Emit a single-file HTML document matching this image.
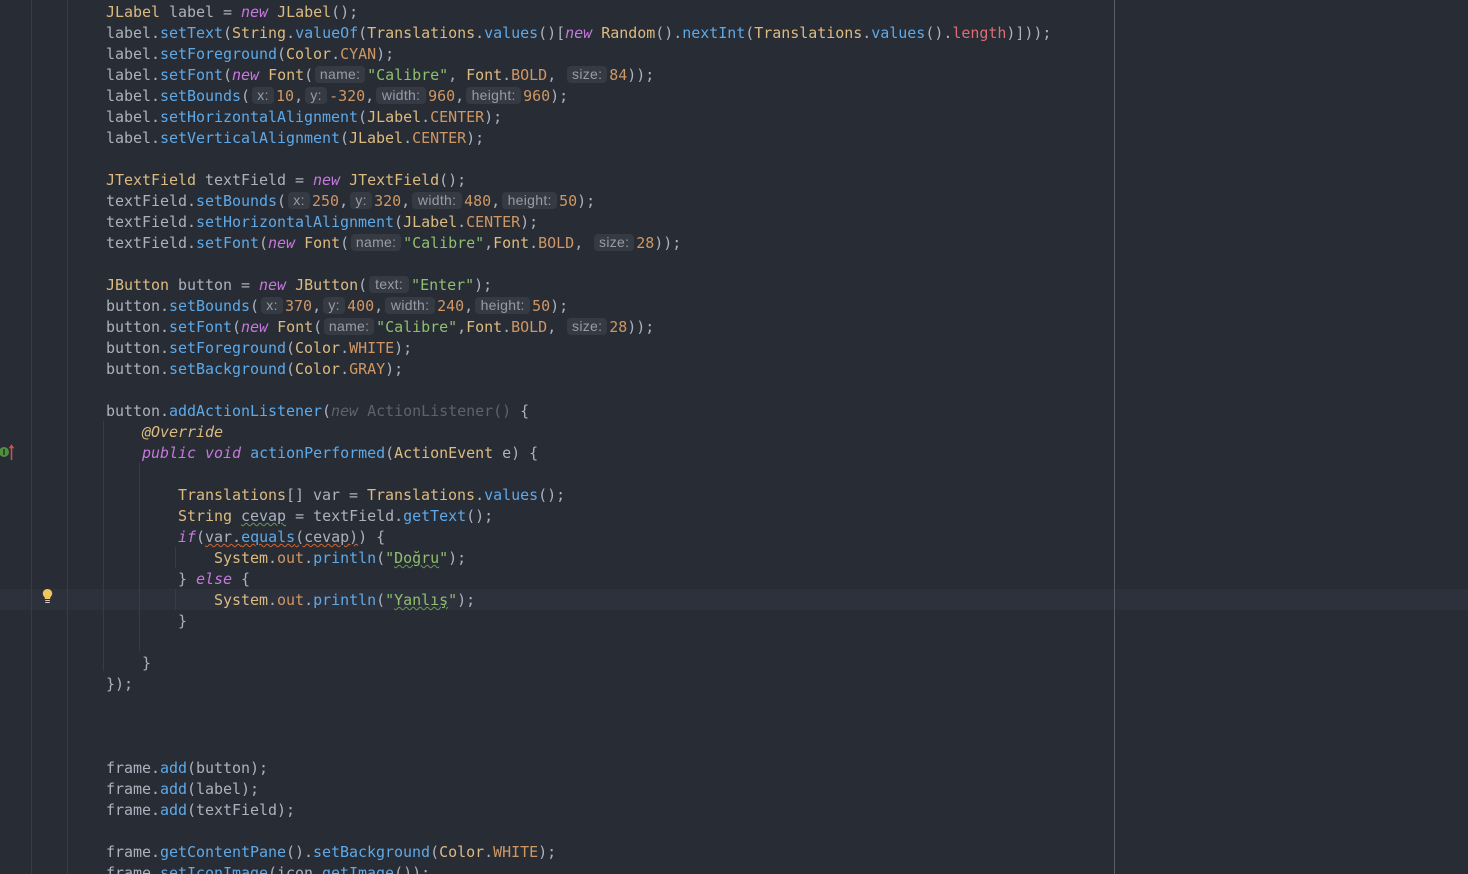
<!DOCTYPE html>
<html><head><meta charset="utf-8"><style>
html,body{margin:0;padding:0;width:1468px;height:874px;overflow:hidden;background:#282c34}
#c{position:absolute;left:106px;top:2px;width:1300px;height:872px;overflow:hidden;font:15px/21px "DejaVu Sans Mono","Liberation Mono",monospace;letter-spacing:-.03px;color:#abb2bf}
#c div{height:21px;white-space:pre}
.v{position:absolute;width:1px;background:#383c44}
b,i,u,s,em,q,tt,kbd{font:inherit;text-decoration:none;quotes:none}
b{color:#dcbb80}u{color:#5ea9e8}i{color:#c678dd;font-style:italic}s{color:#cf9764}em{color:#8fbf70;font-style:normal}q{color:#e06c75}
q:before,q:after{content:none}
tt{color:#5c6370}
.a{color:#dcbb80;font-style:italic}
kbd{display:inline-block;box-sizing:border-box;height:17px;margin:0 2px;font:14px/17px "Liberation Sans",sans-serif;letter-spacing:.3px;text-align:center;background:#353a43;color:#979da8;border-radius:4px;vertical-align:1px}
.x{width:22px}.w{width:50px}.h{width:55px}.n{width:50px}.z{width:40px}.t{width:40px}
.g{text-decoration:underline wavy #6a9955 1px;text-underline-offset:1px}
.r{text-decoration:underline wavy #d4652f 1px;text-underline-offset:1px}
</style></head><body>
<div style="position:absolute;left:0;top:589px;width:1468px;height:21px;background:#2c313c"></div>
<div class="v" style="left:31px;top:0;height:874px"></div>
<div class="v" style="left:67px;top:0;height:874px"></div>
<div class="v" style="left:103px;top:421px;height:250px"></div>
<div class="v" style="left:139px;top:463px;height:188px"></div>
<div class="v" style="left:175px;top:547px;height:21px"></div>
<div class="v" style="left:175px;top:589px;height:21px"></div>
<div class="v" style="left:1114px;top:0;height:874px;background:#585c63"></div>
<svg style="position:absolute;left:0;top:444px" width="16" height="16" viewBox="0 0 16 16"><circle cx="4" cy="8" r="5" fill="#4f8f3e"/><rect x="3.2" y="5" width="1.7" height="6" fill="#2c3a2a"/><path d="M11.5 16V3" stroke="#d0524f" stroke-width="1.5"/><path d="M8.7 4.2L11.5 .3L14.3 4.2Z" fill="#d0524f"/></svg>
<svg style="position:absolute;left:41px;top:588px" width="13" height="16" viewBox="0 0 13 16"><path d="M6.5 1C3.8 1 1.8 3 1.8 5.5C1.8 7.4 3 8.4 3.8 9.6V11H9.2V9.6C10 8.4 11.2 7.4 11.2 5.5C11.2 3 9.2 1 6.5 1Z" fill="#f2c55c"/><path d="M4.2 12.5H8.8M4.2 14.5H8.8" stroke="#c9ccd2" stroke-width="1"/></svg>
<div id="c"><div><b>JLabel</b> label = <i>new</i> <b>JLabel</b>();</div><div>label.<u>setText</u>(<b>String</b>.<u>valueOf</u>(<b>Translations</b>.<u>values</u>()[<i>new</i> <b>Random</b>().<u>nextInt</u>(<b>Translations</b>.<u>values</u>().<q>length</q>)]));</div><div>label.<u>setForeground</u>(<b>Color</b>.<s>CYAN</s>);</div><div>label.<u>setFont</u>(<i>new</i> <b>Font</b>(<kbd class="n">name:</kbd><em>"Calibre"</em>, <b>Font</b>.<s>BOLD</s>, <kbd class="z">size:</kbd><s>84</s>));</div><div>label.<u>setBounds</u>(<kbd class="x">x:</kbd><s>10</s>,<kbd class="x">y:</kbd><s>-320</s>,<kbd class="w">width:</kbd><s>960</s>,<kbd class="h">height:</kbd><s>960</s>);</div><div>label.<u>setHorizontalAlignment</u>(<b>JLabel</b>.<s>CENTER</s>);</div><div>label.<u>setVerticalAlignment</u>(<b>JLabel</b>.<s>CENTER</s>);</div><div></div><div><b>JTextField</b> textField = <i>new</i> <b>JTextField</b>();</div><div>textField.<u>setBounds</u>(<kbd class="x">x:</kbd><s>250</s>,<kbd class="x">y:</kbd><s>320</s>,<kbd class="w">width:</kbd><s>480</s>,<kbd class="h">height:</kbd><s>50</s>);</div><div>textField.<u>setHorizontalAlignment</u>(<b>JLabel</b>.<s>CENTER</s>);</div><div>textField.<u>setFont</u>(<i>new</i> <b>Font</b>(<kbd class="n">name:</kbd><em>"Calibre"</em>,<b>Font</b>.<s>BOLD</s>, <kbd class="z">size:</kbd><s>28</s>));</div><div></div><div><b>JButton</b> button = <i>new</i> <b>JButton</b>(<kbd class="t">text:</kbd><em>"Enter"</em>);</div><div>button.<u>setBounds</u>(<kbd class="x">x:</kbd><s>370</s>,<kbd class="x">y:</kbd><s>400</s>,<kbd class="w">width:</kbd><s>240</s>,<kbd class="h">height:</kbd><s>50</s>);</div><div>button.<u>setFont</u>(<i>new</i> <b>Font</b>(<kbd class="n">name:</kbd><em>"Calibre"</em>,<b>Font</b>.<s>BOLD</s>, <kbd class="z">size:</kbd><s>28</s>));</div><div>button.<u>setForeground</u>(<b>Color</b>.<s>WHITE</s>);</div><div>button.<u>setBackground</u>(<b>Color</b>.<s>GRAY</s>);</div><div></div><div>button.<u>addActionListener</u>(<tt style="font-style:italic">new</tt><tt> ActionListener()</tt> {</div><div>    <span class="a">@Override</span></div><div>    <i>public</i> <i>void</i> <u>actionPerformed</u>(<b>ActionEvent</b> e) {</div><div></div><div>        <b>Translations</b>[] var = <b>Translations</b>.<u>values</u>();</div><div>        <b>String</b> <span class="g">cevap</span> = textField.<u>getText</u>();</div><div>        <i>if</i>(<span class="r">var.<u>equals</u>(cevap)</span>) {</div><div>            <b>System</b>.<s>out</s>.<u>println</u>(<em>"<span class="g">Doğru</span>"</em>);</div><div>        } <i>else</i> {</div><div>            <b>System</b>.<s>out</s>.<u>println</u>(<em>"<span class="g">Yanlış</span>"</em>);</div><div>        }</div><div></div><div>    }</div><div>});</div><div></div><div></div><div></div><div>frame.<u>add</u>(button);</div><div>frame.<u>add</u>(label);</div><div>frame.<u>add</u>(textField);</div><div></div><div>frame.<u>getContentPane</u>().<u>setBackground</u>(<b>Color</b>.<s>WHITE</s>);</div><div>frame.<u>setIconImage</u>(icon.<u>getImage</u>());</div></div>
</body></html>
